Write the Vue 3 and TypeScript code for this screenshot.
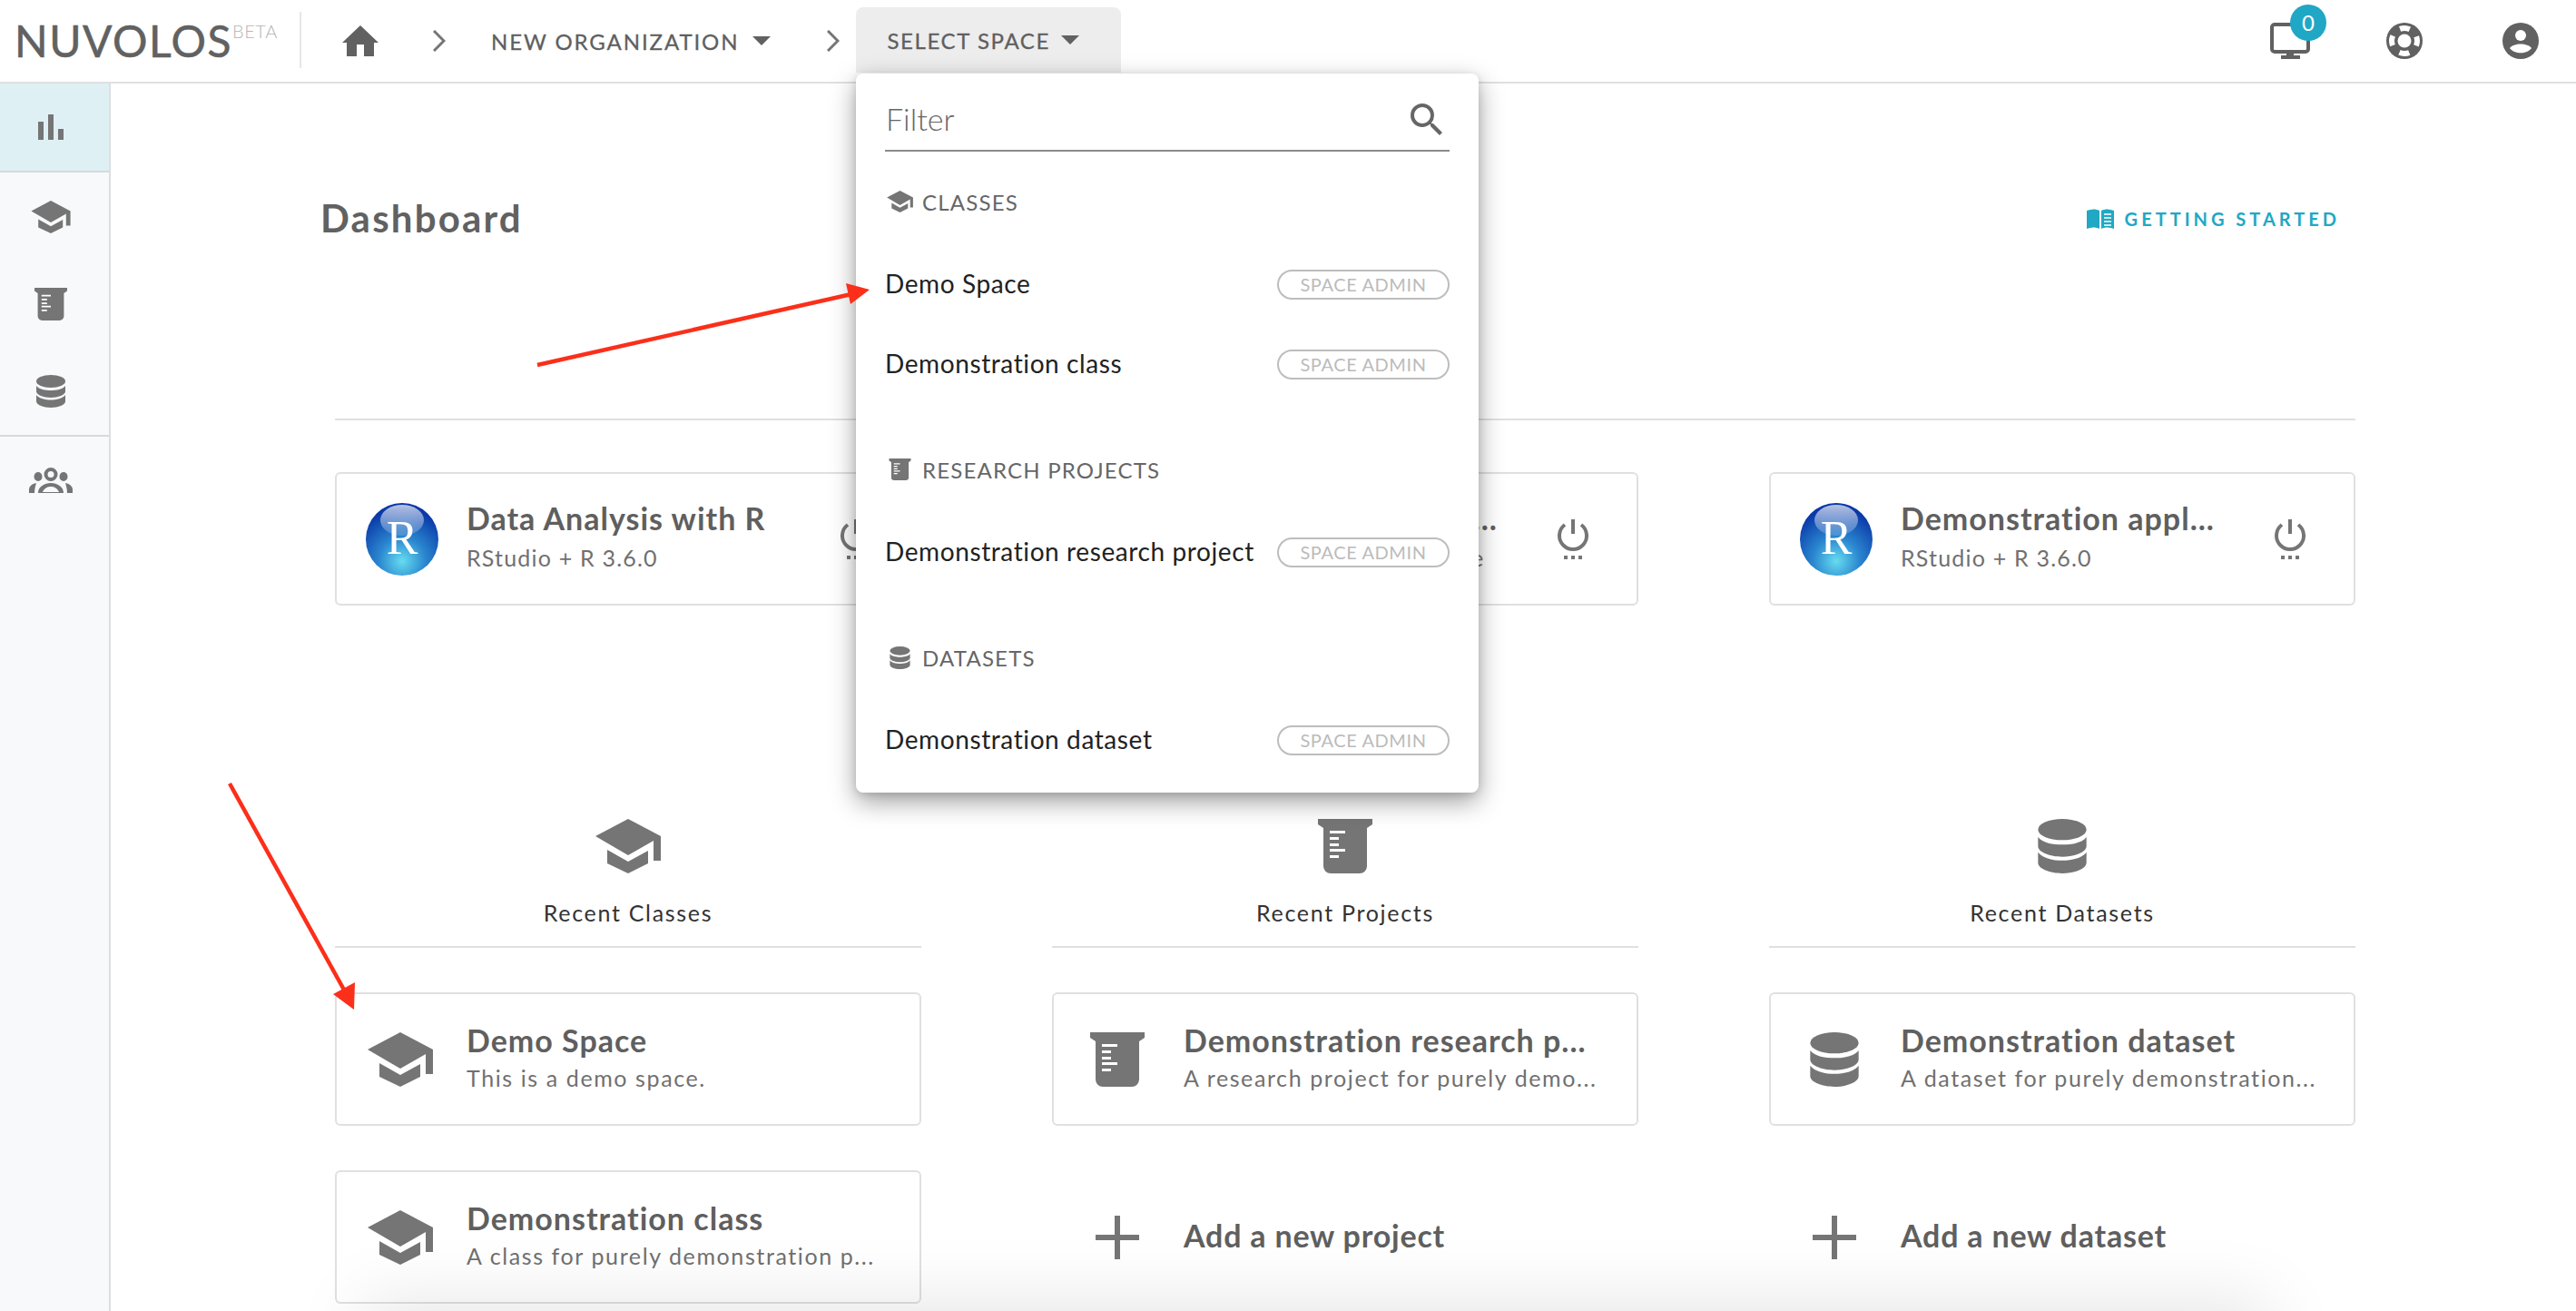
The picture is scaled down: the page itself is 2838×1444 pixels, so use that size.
<script setup lang="ts">
interface Entry { icon: string; title: string; sub?: string }
const apps = [
  { title: 'Data Analysis with R', sub: 'RStudio + R 3.6.0' },
  { title: 'Demonstration appl...', sub: 'Jupyter Lab + Python Stage' },
  { title: 'Demonstration appl...', sub: 'RStudio + R 3.6.0' },
]
const columns: { icon: string; label: string; items: Entry[] }[] = [
  { icon: 'cap', label: 'Recent Classes', items: [
    { icon: 'cap', title: 'Demo Space', sub: 'This is a demo space.' },
    { icon: 'cap', title: 'Demonstration class', sub: 'A class for purely demonstration p...' },
  ] },
  { icon: 'beaker', label: 'Recent Projects', items: [
    { icon: 'beaker', title: 'Demonstration research p...', sub: 'A research project for purely demo...' },
    { icon: 'plus', title: 'Add a new project' },
  ] },
  { icon: 'db', label: 'Recent Datasets', items: [
    { icon: 'db', title: 'Demonstration dataset', sub: 'A dataset for purely demonstration...' },
    { icon: 'plus', title: 'Add a new dataset' },
  ] },
]
const menu = [
  { icon: 'cap', head: 'CLASSES', items: ['Demo Space', 'Demonstration class'] },
  { icon: 'beaker', head: 'RESEARCH PROJECTS', items: ['Demonstration research project'] },
  { icon: 'db', head: 'DATASETS', items: ['Demonstration dataset'] },
]
</script>

<template>
  <div class="page">
    <svg class="sprite" width="0" height="0">
      <defs>
        <symbol id="cap" viewBox="0 0 72 60">
          <path d="M36 0L72 19V46H64V24L36 40L0 19Z" />
          <path d="M13 34L36 47L58 35V49L36 60L13 49Z" />
        </symbol>
        <symbol id="beaker" viewBox="0 0 60 60">
          <path d="M0 0H60V6L54 10V52a8 8 0 0 1-8 8H14a8 8 0 0 1-8-8V10L0 6Z" />
          <path fill="#fff" d="M13 13h17v3H13zM13 20h10v3H13zM13 27h10v3H13zM13 33h17v3H13zM13 40h10v3H13z" />
        </symbol>
        <symbol id="db" viewBox="0 0 32 36">
          <ellipse cx="16" cy="7" rx="16" ry="7" />
          <path d="M0 12C3 16 10 17 16 17S29 16 32 12V18C32 22 24 25 16 25S0 22 0 18Z" />
          <path d="M0 22C3 26 10 27.500 16 27.500S29 26 32 22V29C32 33 24 36 16 36S0 33 0 29Z" />
        </symbol>
        <symbol id="plus" viewBox="0 0 48 48">
          <path d="M21 0h6v21h21v6H27v21h-6V27H0v-6h21z" />
        </symbol>
        <symbol id="power" viewBox="0 0 34 44">
          <path d="M17 0V16M8 6A15 15 0 1 0 26 6" fill="none" stroke="currentColor" stroke-width="4" />
          <path d="M7 40h4v4H7zM15 40h4v4h-4zM23 40h4v4h-4z" />
        </symbol>
        <symbol id="rlogo" viewBox="0 0 80 80">
          <circle cx="40" cy="40" r="40" fill="url(#rball)" />
          <ellipse cx="40" cy="19" rx="24" ry="17" fill="url(#rgloss)" />
          <text x="40" y="56" text-anchor="middle" fill="#fff" font-family="'Liberation Serif', serif" font-size="52">R</text>
        </symbol>
        <radialGradient id="rball" cx="50%" cy="80%" r="72%">
          <stop offset="0" stop-color="#66dcf0" />
          <stop offset=".45" stop-color="#2a86cf" />
          <stop offset="1" stop-color="#0a38a8" />
        </radialGradient>
        <linearGradient id="rgloss" x1="0" y1="0" x2="0" y2="1">
          <stop offset="0" stop-color="#fff" stop-opacity=".7" />
          <stop offset="1" stop-color="#fff" stop-opacity=".15" />
        </linearGradient>
      </defs>
    </svg>

    <header class="topbar">
      <div class="brand"><span class="logo">NUVOLOS</span><sup class="beta">BETA</sup></div>
      <div class="sep"></div>
      <svg class="home" viewBox="0 0 40 34"><path d="M20 0L40 19H35V34H24V21H16V34H5V19H0Z" /></svg>
      <svg class="chev first" viewBox="0 0 14 24"><path d="M1 1L12 12L1 23" /></svg>
      <span class="crumb">NEW ORGANIZATION</span>
      <span class="caret"></span>
      <svg class="chev second" viewBox="0 0 14 24"><path d="M1 1L12 12L1 23" /></svg>
      <button class="space-btn"><span class="crumb">SELECT SPACE</span><span class="caret"></span></button>
      <div class="top-right">
        <div class="monitor">
          <svg viewBox="0 0 44 40" width="44" height="40">
            <rect x="2" y="2" width="40" height="30" rx="3" fill="none" stroke="#616161" stroke-width="4" />
            <path fill="#616161" d="M18 32h8v4h7v4H12v-4h6z" />
          </svg>
          <span class="badge">0</span>
        </div>
        <svg class="ring" viewBox="0 0 40 40" width="40" height="40">
          <circle cx="20" cy="20" r="20" fill="#616161" />
          <circle cx="20" cy="20" r="14" fill="none" stroke="#fff" stroke-width="6" stroke-dasharray="11 11" stroke-dashoffset="5.500" />
          <circle cx="20" cy="20" r="7.500" fill="#fff" />
        </svg>
        <svg class="acct" viewBox="0 0 40 40" width="40" height="40">
          <circle cx="20" cy="20" r="20" fill="#616161" />
          <circle cx="20" cy="14" r="6" fill="#fff" />
          <path fill="#fff" d="M8 28C12 22 28 22 32 28C27 35 13 35 8 28Z" />
        </svg>
      </div>
    </header>

    <div class="body">
      <aside class="sidebar">
        <div class="side-active">
          <svg class="bars" viewBox="0 0 28 28"><path d="M0 8h6v20H0zM11 0h6v28h-6zM22 16h6v12h-6z" /></svg>
        </div>
        <div class="side-group">
          <svg class="side-cap"><use href="#cap" /></svg>
          <svg class="side-beaker"><use href="#beaker" /></svg>
          <svg class="side-db"><use href="#db" /></svg>
        </div>
        <div class="side-team">
          <svg viewBox="0 0 48 28" width="48" height="28">
            <path fill-rule="evenodd" d="M24 0a7.500 7.500 0 1 1 0 15a7.500 7.500 0 0 1 0-15zM24 4a3.500 3.500 0 1 0 0 7a3.500 3.500 0 0 0 0-7z" />
            <ellipse cx="10" cy="10" rx="4.500" ry="5" />
            <ellipse cx="38" cy="10" rx="4.500" ry="5" />
            <path fill-rule="evenodd" d="M10 28C10 21 17 17 24 17S38 21 38 28ZM15 27H33C31 22 27 21 24 21S17 22 15 27Z" />
            <path d="M0 28V24C0 21 3 18 8 17C7 20 6 24 6 28ZM48 28V24C48 21 45 18 40 17C41 20 42 24 42 28Z" />
          </svg>
        </div>
      </aside>

      <main class="main">
        <div class="head">
          <h1>Dashboard</h1>
          <a class="started">
            <svg viewBox="0 0 30 22" width="30" height="22">
              <path d="M0 2C5 0 10 0 14 2V22C10 20 5 20 0 22Z" />
              <path d="M16 2C20 0 25 0 30 2V22C25 20 20 20 16 22Z" />
              <path stroke="#fff" stroke-width="1.500" d="M19 6H27M19 10H27M19 14H27M19 18H27" />
            </svg>
            GETTING STARTED
          </a>
        </div>
        <div class="content">
          <div class="apps grid">
            <div v-for="a in apps" :key="a.sub + a.title" class="card app">
              <svg class="rlogo"><use href="#rlogo" /></svg>
              <div class="txt">
                <div class="title">{{ a.title }}</div>
                <div class="sub">{{ a.sub }}</div>
              </div>
              <svg class="power"><use href="#power" /></svg>
            </div>
          </div>
          <div class="grid recent">
            <section v-for="c in columns" :key="c.label">
              <div class="col-head">
                <svg class="col-ic"><use :href="'#' + c.icon" /></svg>
                <div class="col-label">{{ c.label }}</div>
              </div>
              <div class="col-items">
                <div v-for="it in c.items" :key="it.title" class="card entry" :class="{ bare: it.icon === 'plus' }">
                  <div class="entry-ic"><svg :class="'e-' + it.icon"><use :href="'#' + it.icon" /></svg></div>
                  <div class="txt">
                    <div class="title">{{ it.title }}</div>
                    <div v-if="it.sub" class="sub">{{ it.sub }}</div>
                  </div>
                </div>
              </div>
            </section>
          </div>
        </div>
      </main>
    </div>

    <div class="fade"></div>

    <div class="dropdown">
      <div class="filter"><span class="filter-label">Filter</span>
        <svg viewBox="3 3 18 18" width="36" height="36"><path d="M15.500 14h-.79l-.28-.27A6.471 6.471 0 0 0 16 9.500 6.500 6.500 0 1 0 9.500 16c1.610 0 3.090-.59 4.230-1.570l.27.28v.79l5 4.990L20.490 19l-4.990-5zm-6 0C7.010 14 5 11.990 5 9.500S7.010 5 9.500 5 14 7.010 14 9.500 11.990 14 9.500 14z" /></svg>
      </div>
      <div v-for="m in menu" :key="m.head" class="menu-sec">
        <div class="menu-head"><svg :class="'m-' + m.icon"><use :href="'#' + m.icon" /></svg>{{ m.head }}</div>
        <div v-for="i in m.items" :key="i" class="menu-item"><span>{{ i }}</span><span class="pill">SPACE ADMIN</span></div>
      </div>
    </div>

    <svg class="arrows" viewBox="0 0 2838 1444" width="2838" height="1444">
      <g stroke="#fb2f1a" fill="#fb2f1a">
        <path stroke-width="4.500" d="M592 402L938 324" />
        <path stroke-width="0" d="M958 319L932 312L937 335Z" />
        <path stroke-width="4.500" d="M253 863L380 1092" />
        <path stroke-width="0" d="M390 1112L391 1082L367 1095Z" />
      </g>
    </svg>
  </div>
</template>

<style>
html, body { margin: 0; background: #fff; }
</style>

<style scoped>
.page {
  position: relative;
  width: 2838px;
  height: 1444px;
  overflow: hidden;
  background: #fff;
  font-family: Lato, "Open Sans", sans-serif;
  color: #5f5f5f;
}
.sprite { position: absolute; }
svg { fill: currentColor; display: block; }

.topbar {
  display: flex;
  align-items: center;
  height: 90px;
  border-bottom: 2px solid #e0e0e0;
  padding-left: 16px;
}
.brand { display: flex; align-items: flex-start; width: 292px; color: #616161; }
.logo { font-size: 48px; line-height: 50px; letter-spacing: 1.500px; -webkit-text-stroke: .6px #616161; }
.beta { font-size: 20px; line-height: 24px; color: #b5b5b5; margin: 2px 0 0 0; font-weight: 300; letter-spacing: .6px; }
.sep { width: 2px; height: 62px; background: #e6e6e6; margin: -2px 0 0 22px; }
.home { width: 40px; height: 34px; margin: 0 0 0 45px; color: #616161; }
.chev { width: 14px; height: 24px; fill: none; stroke: #757575; stroke-width: 3; }
.chev.first { margin: 0 50px 0 60px; }
.chev.second { margin: 0 18px 0 62px; }
.crumb { font-size: 24px; letter-spacing: 1.900px; color: #5f5f5f; font-weight: 400; white-space: nowrap; -webkit-text-stroke: .3px #5f5f5f; }
.caret { width: 0; height: 0; border-left: 10px solid transparent; border-right: 10px solid transparent; border-top: 10px solid #616161; margin-left: 15px; }
.space-btn {
  display: flex;
  align-items: center;
  height: 72px;
  width: 292px;
  margin-top: -2px;
  padding: 0 0 0 34px;
  border: 0;
  border-radius: 8px 8px 0 0;
  background: #ededed;
  font-family: inherit;
}
.space-btn .crumb { letter-spacing: 1.600px; }
.space-btn .caret { margin-left: 12px; }
.top-right { display: flex; align-items: center; margin-left: auto; padding-right: 41px; gap: 84px; color: #616161; }
.monitor { position: relative; width: 44px; height: 40px; }
.ring { margin-right: 4px; }
.badge {
  position: absolute;
  left: 22px;
  top: -20px;
  width: 40px;
  height: 40px;
  border-radius: 50%;
  background: #20a7c5;
  color: #fff;
  font-size: 24px;
  line-height: 40px;
  text-align: center;
}

.body { display: flex; height: 1352px; }
.sidebar { width: 122px; box-sizing: border-box; border-right: 2px solid #dcdfe2; background: #f8f9fb; color: #757575; flex: none; }
.side-active { height: 98px; box-sizing: border-box; padding-right: 8px; background: #dff0f4; border-bottom: 2px solid #d5d9dc; display: flex; align-items: center; justify-content: center; }
.bars { width: 28px; height: 28px; }
.side-group { height: 291px; box-sizing: border-box; padding-right: 8px; border-bottom: 2px solid #d5d9dc; display: flex; flex-direction: column; align-items: center; }
.side-cap { width: 44px; height: 36px; margin-top: 31px; flex: none; }
.side-beaker { width: 36px; height: 36px; margin-top: 60px; flex: none; }
.side-db { width: 32px; height: 36px; margin-top: 60px; flex: none; }
.side-team { display: flex; justify-content: center; padding: 34px 8px 0 0; }

.main { flex: 1; min-width: 0; }
.head { display: flex; justify-content: space-between; align-items: center; padding: 118px 260px 0 231px; height: 60px; }
h1 { margin: 0; font-size: 42px; font-weight: 700; color: #616161; letter-spacing: 2.200px; }
.started { display: flex; align-items: center; gap: 12px; margin-top: 2px; color: #20a8c4; font-size: 20px; font-weight: 700; letter-spacing: 4px; }

.content { margin: 0 0 0 247px; width: 2226px; }
.grid { display: grid; grid-template-columns: repeat(3, 646px); column-gap: 144px; }
.apps { margin-top: 191px; border-top: 2px solid #e0e0e0; padding-top: 57px; }
.card {
  display: flex;
  align-items: center;
  height: 147px;
  box-sizing: border-box;
  border: 2px solid #e0e0e0;
  border-radius: 6px;
  background: #fff;
}
.app { padding-left: 32px; position: relative; }
.rlogo { width: 80px; height: 80px; flex: none; }
.app .txt { margin-left: 31px; flex: 1; min-width: 0; padding-bottom: 6px; }
.app .sub { margin-top: 4px; letter-spacing: 1.200px; }
.txt { white-space: nowrap; padding-bottom: 4px; }
.title { font-size: 34px; line-height: 42px; font-weight: 700; color: #5f5f5f; letter-spacing: 1px; }
.sub { font-size: 25px; line-height: 36px; margin-top: 2px; color: #707070; letter-spacing: 1.600px; }
.power { width: 34px; height: 44px; color: #757575; flex: none; margin-right: 53px; }

.recent { margin-top: 235px; }
.col-head { display: flex; flex-direction: column; align-items: center; height: 142px; border-bottom: 2px solid #e0e0e0; box-sizing: border-box; color: #757575; }
.col-ic { width: 72px; height: 60px; flex: none; }
.col-label { font-size: 25px; line-height: 36px; margin-top: 25px; color: #333; letter-spacing: 1.700px; }
.col-items { display: flex; flex-direction: column; gap: 49px; margin-top: 49px; }
.entry { padding-left: 34px; }
.entry-ic { width: 72px; height: 60px; display: flex; justify-content: center; align-items: center; color: #757575; flex: none; margin-right: 37px; }
.entry-ic svg { width: 72px; height: 60px; }
.entry-ic .e-plus { width: 48px; height: 48px; }
.bare { border-color: transparent; background: transparent; }
.bare .title { letter-spacing: .8px; }

.fade {
  position: absolute;
  left: 440px;
  width: 2020px;
  top: 1474px;
  height: 40px;
  box-shadow: 0 0 80px 40px rgba(0,0,0,.1);
  pointer-events: none;
}

.dropdown {
  position: absolute;
  left: 943px;
  top: 81px;
  width: 686px;
  box-sizing: border-box;
  padding: 0 32px 15px;
  background: #fff;
  border-radius: 8px;
  box-shadow: 0 10px 28px rgba(0,0,0,.38), 0 2px 8px rgba(0,0,0,.12);
}
.filter { display: flex; align-items: center; justify-content: space-between; height: 66px; padding: 18px 7px 0 1px; border-bottom: 2px solid #8a8a8a; font-size: 34px; font-weight: 300; color: #666; }
.filter-label { margin-top: -3px; }
.menu-sec { margin-top: 29px; }
.filter + .menu-sec { margin-top: 11px; }
.menu-head { display: flex; align-items: center; height: 90px; font-size: 24px; letter-spacing: 1.200px; color: #666; padding: 0 0 2px 2px; box-sizing: border-box; gap: 10px; }
.menu-head svg { width: 29px; height: 24px; color: #757575; }
.menu-head .m-db { width: 29px; height: 25px; }
.menu-item { display: flex; align-items: center; justify-content: space-between; height: 88px; font-size: 28px; color: #222; letter-spacing: .6px; white-space: nowrap; }
.pill { width: 190px; height: 33px; box-sizing: border-box; border: 2px solid #bdbdbd; border-radius: 17px; color: #bbb; font-size: 20px; line-height: 29px; text-align: center; letter-spacing: .6px; margin-top: 2px; }

.arrows { position: absolute; left: 0; top: 0; pointer-events: none; }
</style>
